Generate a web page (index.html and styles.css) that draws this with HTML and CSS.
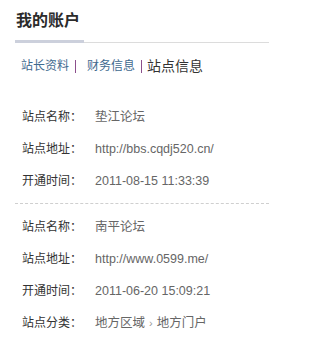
FILE: index.html
```html
<!DOCTYPE html>
<html lang="zh-CN">
<head>
<meta charset="utf-8">
<title>我的账户</title>
<link rel="stylesheet" href="styles.css">
</head>
<body>
<div class="page">
  <div class="title-bar">
    <h1 class="title">我的账户</h1>
  </div>
  <div class="tabs">
    <a class="tab" href="#">站长资料</a>
    <span class="sep sep-1"></span>
    <a class="tab" href="#">财务信息</a>
    <span class="sep sep-2"></span>
    <span class="tab-current">站点信息</span>
  </div>
  <div class="group group-first">
    <div class="row"><span class="label">站点名称：</span><span class="value">垫江论坛</span></div>
    <div class="row"><span class="label">站点地址：</span><span class="value">http://bbs.cqdj520.cn/</span></div>
    <div class="row"><span class="label">开通时间：</span><span class="value">2011-08-15 11:33:39</span></div>
  </div>
  <div class="group group-next">
    <div class="row"><span class="label">站点名称：</span><span class="value">南平论坛</span></div>
    <div class="row"><span class="label">站点地址：</span><span class="value">http://www.0599.me/</span></div>
    <div class="row"><span class="label">开通时间：</span><span class="value">2011-06-20 15:09:21</span></div>
    <div class="row"><span class="label">站点分类：</span><span class="value">地方区域<span class="crumb">›</span>地方门户</span></div>
  </div>
</div>
</body>
</html>
```
FILE: styles.css
```css
html, body {
  margin: 0;
  padding: 0;
  background: #fff;
}
body {
  font-family: "Liberation Sans", "Noto Sans CJK SC", sans-serif;
  font-size: 12px;
  color: #333;
}
.page {
  width: 269px;
}
.title-bar {
  margin-left: 15px;
  display: flex;
  border-bottom: 1px solid #dcdcdc;
}
.title {
  margin: 0 0 -1px 0;
  padding: 9px 4px 7px 1px;
  font-size: 16px;
  line-height: 24px;
  font-weight: bold;
  color: #2b2b2b;
  border-bottom: 3px solid #ccd0dc;
}
.tabs {
  display: flex;
  align-items: center;
  margin: 13px 0 0 21px;
  height: 20px;
}
.tab {
  font-size: 12px;
  color: #3f6a8f;
  text-decoration: none;
  line-height: 20px;
}
.sep {
  display: inline-block;
  width: 1px;
  height: 13px;
  background: #8c4f8c;
}
.sep-1 {
  margin: 0 11px 0 6px;
}
.sep-2 {
  margin: 0 5px 0 6px;
}
.tab-current {
  font-size: 14px;
  color: #333;
  line-height: 20px;
}
.group {
  margin-left: 15px;
}
.group-first {
  margin-top: 25px;
  padding-bottom: 6px;
  border-bottom: 1px dashed #cfcfcf;
}
.group-next {
  padding-top: 7px;
}
.row {
  display: flex;
  height: 32px;
  line-height: 32px;
  padding-left: 7px;
}
.label {
  width: 73px;
  flex: none;
  color: #333;
}
.value {
  color: #666;
  font-size: 12.5px;
}
.crumb {
  color: #999;
  margin: 0 4px;
  font-size: 11px;
}
```
